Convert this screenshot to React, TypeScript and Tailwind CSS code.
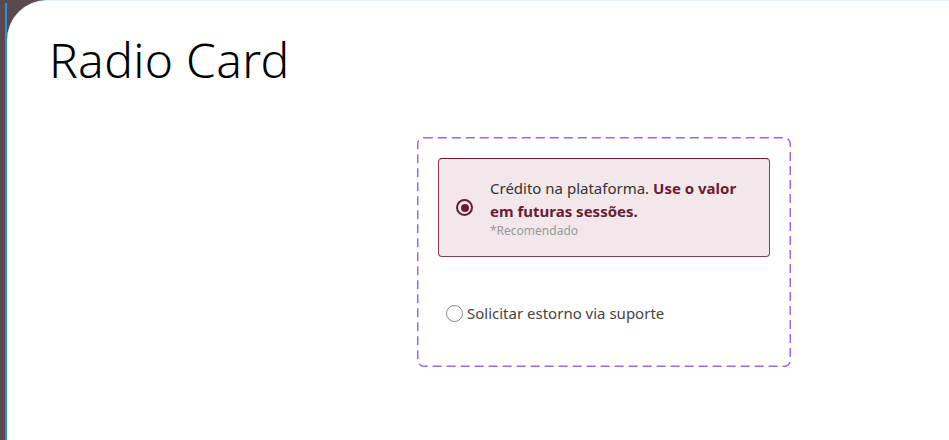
export default function App() {
  return (
    <div className="flex h-[440px] w-[949px] overflow-hidden bg-[#5a4a50]" style={{ fontFamily: "'Noto Sans', Lato, sans-serif" }}>
      <div className="w-[5px] shrink-0" />
      <div className="mt-[3px] w-[2px] shrink-0 bg-[#2b8fd9]" />
      <main className="flex-1 rounded-tl-[40px] border-t border-[#e6f0fa] bg-white">
        <h1 className="ml-[42px] mt-[31px] text-[48px] leading-[56px] font-light tracking-[0.3px] text-black">Radio Card</h1>

        {/* dashed group */}
        <div className="relative ml-[410px] mt-[49px] w-[374px] rounded-md p-[21px]">
          <svg className="pointer-events-none absolute inset-0 h-full w-full" preserveAspectRatio="none">
            <rect x="0.75" y="0.75" width="372.5" height="228.5" rx="6" fill="none" stroke="#a066f2" strokeWidth="1.5" strokeDasharray="9 5" />
          </svg>

          {/* selected option */}
          <label className="flex h-[99px] items-center gap-[17px] rounded border border-[#8b3a55] border-t-[#6d1431] bg-[#f2e7ea] pl-[17px] pr-3">
            <span className="flex h-[17px] w-[17px] shrink-0 items-center justify-center rounded-full border-2 border-[#6d1a36]">
              <span className="h-[8px] w-[8px] rounded-full bg-[#6d1a36]" />
            </span>
            <span className="flex flex-col">
              <span className="text-[15px] leading-[23px] text-[#333]">
                Crédito na plataforma. <b className="font-bold text-[#6d1a36]">Use o valor em futuras sessões.</b>
              </span>
              <span className="text-[12px] leading-[16px] text-[#999]">*Recomendado</span>
            </span>
          </label>

          {/* second option */}
          <label className="mt-[45px] mb-[22px] ml-[8px] flex items-center gap-[4px]">
            <span className="h-[17px] w-[17px] shrink-0 rounded-full border border-[#888]" />
            <span className="text-[15px] leading-[22px] text-[#444]">Solicitar estorno via suporte</span>
          </label>
        </div>
      </main>
    </div>
  );
}
